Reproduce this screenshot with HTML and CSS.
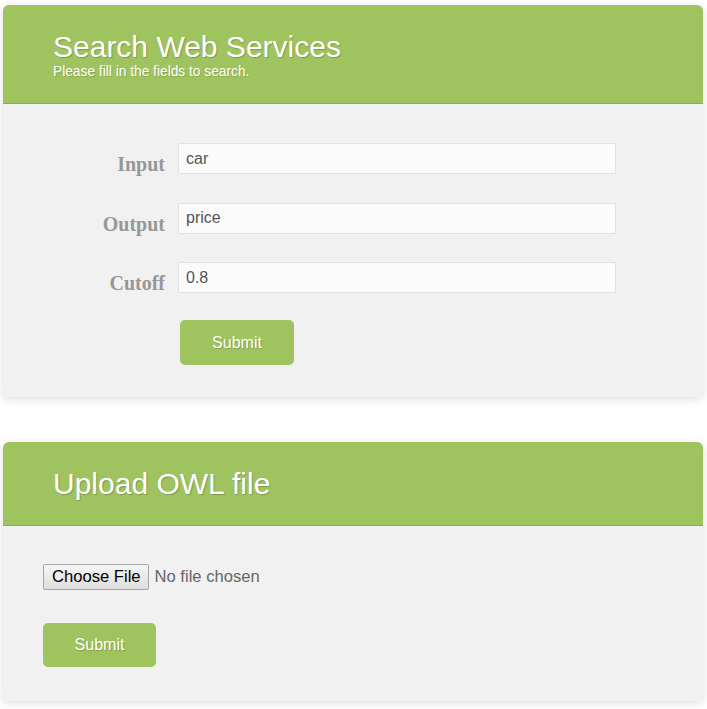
FILE: index.html
```html
<!DOCTYPE html>
<html>
<head>
<meta charset="utf-8">
<title>Search Web Services</title>
<link rel="stylesheet" href="styles.css">
</head>
<body>
<section class="card">
  <header class="card-head head-search">
    <h1 class="card-title">Search Web Services</h1>
    <p class="card-sub">Please fill in the fields to search.</p>
  </header>
  <form class="search-form">
    <div class="row">
      <label class="label" for="in">Input</label>
      <input class="field" id="in" type="text" value="car">
    </div>
    <div class="row">
      <label class="label" for="out">Output</label>
      <input class="field" id="out" type="text" value="price">
    </div>
    <div class="row">
      <label class="label" for="cut">Cutoff</label>
      <input class="field" id="cut" type="text" value="0.8">
    </div>
    <div class="row row-btn">
      <span></span>
      <button class="btn btn-search" type="button">Submit</button>
    </div>
  </form>
</section>

<section class="card card-upload">
  <header class="card-head head-upload">
    <h1 class="card-title">Upload OWL file</h1>
  </header>
  <form class="upload-form">
    <input class="file" type="file">
    <button class="btn" type="button">Submit</button>
  </form>
</section>
</body>
</html>
```

FILE: styles.css
```css
html, body {
  margin: 0;
  padding: 0;
  background: #ffffff;
}
body {
  padding-top: 5px;
  padding-bottom: 8px;
  font-family: "Liberation Sans", Arial, sans-serif;
}
.card {
  margin: 0 4px 0 3px;
  background: #f1f1f1;
  border-radius: 6px;
  overflow: hidden;
  box-shadow: 0 2px 10px rgba(0, 0, 0, 0.14);
}
.card-upload {
  margin-top: 45px;
}
.card-head {
  background: #9fc45f;
  border-bottom: 1px solid #86b043;
  padding: 26px 50px 23px;
  color: #ffffff;
}
.head-upload {
  padding-bottom: 26px;
}
.card-title {
  margin: 0;
  font-size: 30px;
  line-height: 31px;
  font-weight: normal;
  text-shadow: 1px 1px 1px rgba(0, 0, 0, 0.22);
}
.card-sub {
  margin: 0;
  padding-top: 2px;
  font-size: 13.75px;
  line-height: 16px;
  text-shadow: 1px 1px 1px rgba(0, 0, 0, 0.15);
}
.search-form {
  padding: 39px 0 32px;
  display: flex;
  flex-direction: column;
  gap: 28.5px;
}
.row {
  display: grid;
  grid-template-columns: 162px 438px;
  column-gap: 13px;
  align-items: start;
}
.row-btn {
  margin-top: -1.5px;
}
.label {
  box-sizing: border-box;
  height: 31px;
  text-align: right;
  font-family: "Liberation Serif", "Times New Roman", serif;
  font-weight: bold;
  font-size: 20px;
  line-height: 22px;
  padding-top: 10px;
  color: #979797;
}
.field {
  box-sizing: border-box;
  height: 31px;
  margin: 0;
  border: 1px solid #e2e2e2;
  background: #fbfbfb;
  padding: 0 7px;
  font-family: "Liberation Sans", Arial, sans-serif;
  font-size: 16px;
  color: #555555;
  outline: none;
}
.btn {
  width: 114px;
  height: 45px;
  border: none;
  border-radius: 5px;
  background: #9fc45f;
  color: #ffffff;
  font-family: "Liberation Sans", Arial, sans-serif;
  font-size: 16px;
  text-shadow: 1px 1px 1px rgba(0, 0, 0, 0.2);
  padding: 0;
  cursor: pointer;
}
.btn-search {
  margin-left: 2px;
}
.upload-form {
  padding: 38px 40px 34px;
  display: flex;
  flex-direction: column;
  align-items: flex-start;
  gap: 33px;
}
.upload-form .btn {
  width: 113px;
  height: 44px;
}
.file {
  font-family: "Liberation Sans", Arial, sans-serif;
  font-size: 16.6px;
  color: #666666;
  margin: 0;
}
.file::file-selector-button {
  font-family: "Liberation Sans", Arial, sans-serif;
  font-size: 16.6px;
  color: #000000;
  height: 26px;
  padding: 0 7px 0 8px;
  margin-right: 6px;
  border: 1px solid #a6a6a6;
  border-radius: 2px;
  background: linear-gradient(#f6f6f6, #dedede);
}
```
